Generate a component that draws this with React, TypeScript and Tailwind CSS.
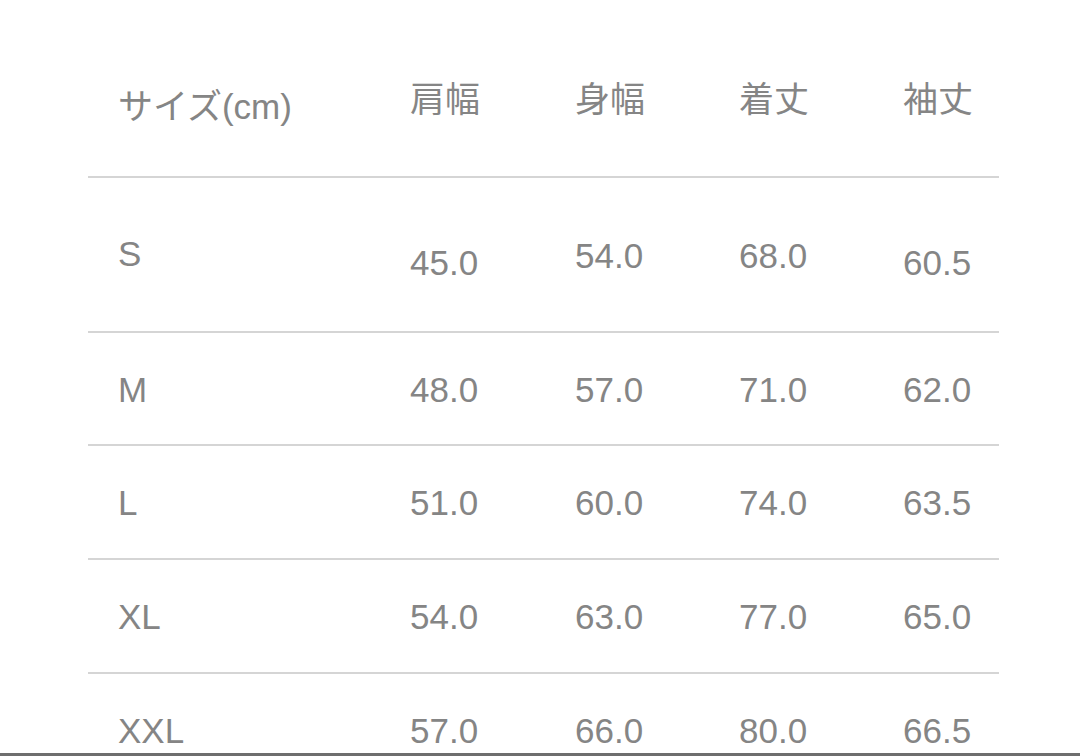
import React from 'react';

const font = { fontFamily: '"Liberation Sans", "Noto Sans CJK JP", sans-serif' };

interface SizeRow {
  size: string;
  values: string[];
  rowClass: string;
  labelPad: string;
  valuePads: string[];
}

const rows: SizeRow[] = [
  {
    size: 'S',
    values: ['45.0', '54.0', '68.0', '60.5'],
    rowClass: 'h-[153px] border-b-2',
    labelPad: 'pt-[58px]',
    valuePads: ['pt-[67px]', 'pt-[60px]', 'pt-[60px]', 'pt-[67px]'],
  },
  {
    size: 'M',
    values: ['48.0', '57.0', '71.0', '62.0'],
    rowClass: 'h-[111px] border-b-2',
    labelPad: 'pt-[39px]',
    valuePads: ['pt-[39px]', 'pt-[39px]', 'pt-[39px]', 'pt-[39px]'],
  },
  {
    size: 'L',
    values: ['51.0', '60.0', '74.0', '63.5'],
    rowClass: 'h-[112px] border-b-2',
    labelPad: 'pt-[39px]',
    valuePads: ['pt-[39px]', 'pt-[39px]', 'pt-[39px]', 'pt-[39px]'],
  },
  {
    size: 'XL',
    values: ['54.0', '63.0', '77.0', '65.0'],
    rowClass: 'h-[112px] border-b-2',
    labelPad: 'pt-[39px]',
    valuePads: ['pt-[39px]', 'pt-[39px]', 'pt-[39px]', 'pt-[39px]'],
  },
  {
    size: 'XXL',
    values: ['57.0', '66.0', '80.0', '66.5'],
    rowClass: 'h-[79px]',
    labelPad: 'pt-[39px]',
    valuePads: ['pt-[39px]', 'pt-[39px]', 'pt-[39px]', 'pt-[39px]'],
  },
];

const headers = ['肩幅', '身幅', '着丈', '袖丈'];

const gridCols = 'grid grid-cols-[322px_165px_164px_164px_1fr]';

export default function App() {
  return (
    <div className="w-[1080px] h-[756px] bg-white flex flex-col overflow-hidden" style={font}>
      <div className="flex-1 pl-[88px] pr-[81px]">
        {/* header */}
        <div className={`${gridCols} h-[178px] border-b-2 border-[#d5d5d5] text-[35px] leading-none text-[#858585]`}>
          <div className="pl-[30px] pt-[89px] whitespace-nowrap">サイズ(cm)</div>
          {headers.map((h) => (
            <div key={h} className="pt-[82px] whitespace-nowrap">
              {h}
            </div>
          ))}
        </div>

        {rows.map((row) => (
          <div
            key={row.size}
            className={`${gridCols} ${row.rowClass} box-content border-[#d5d5d5] text-[35px] leading-none text-[#858585]`}
          >
            <div className={`pl-[30px] ${row.labelPad}`}>{row.size}</div>
            {row.values.map((v, i) => (
              <div key={i} className={row.valuePads[i]}>
                {v}
              </div>
            ))}
          </div>
        ))}
      </div>
      <div className="h-[3px] bg-[#6e6e6e]" />
    </div>
  );
}
